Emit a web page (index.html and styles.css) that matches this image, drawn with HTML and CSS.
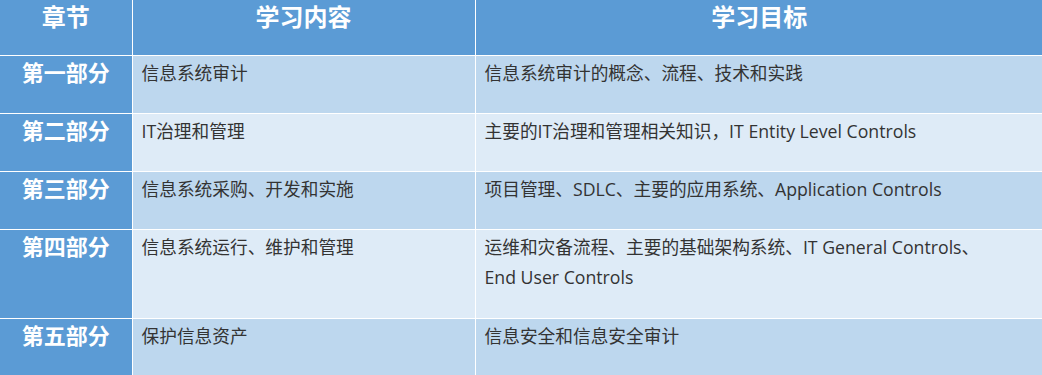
FILE: index.html
```html
<!DOCTYPE html>
<html lang="zh-CN">
<head>
<meta charset="utf-8">
<title>学习内容</title>
<link rel="stylesheet" href="styles.css">
</head>
<body>
<table class="plan">
  <colgroup>
    <col class="c1">
    <col class="c2">
    <col class="c3">
  </colgroup>
  <thead>
    <tr class="head">
      <th>章节</th>
      <th>学习内容</th>
      <th>学习目标</th>
    </tr>
  </thead>
  <tbody>
    <tr class="odd">
      <th>第一部分</th>
      <td>信息系统审计</td>
      <td>信息系统审计的概念、流程、技术和实践</td>
    </tr>
    <tr class="even">
      <th>第二部分</th>
      <td>IT治理和管理</td>
      <td>主要的IT治理和管理相关知识，IT Entity Level Controls</td>
    </tr>
    <tr class="odd">
      <th>第三部分</th>
      <td>信息系统采购、开发和实施</td>
      <td>项目管理、SDLC、主要的应用系统、Application Controls</td>
    </tr>
    <tr class="even tall">
      <th>第四部分</th>
      <td>信息系统运行、维护和管理</td>
      <td>运维和灾备流程、主要的基础架构系统、IT General Controls、<br>End User Controls</td>
    </tr>
    <tr class="odd">
      <th>第五部分</th>
      <td>保护信息资产</td>
      <td>信息安全和信息安全审计</td>
    </tr>
  </tbody>
</table>
</body>
</html>
```

FILE: styles.css
```css
html, body {
  margin: 0;
  padding: 0;
  background: #ffffff;
}

.plan {
  border-collapse: collapse;
  table-layout: fixed;
  width: 1043px;
  font-family: "Open Sans", "Noto Sans CJK SC", sans-serif;
}

.c1 { width: 132px; }
.c2 { width: 343px; }
.c3 { width: 568px; }

.plan th,
.plan td {
  border: 1px solid #ffffff;
  padding: 0;
  vertical-align: top;
  text-align: left;
}

.plan tr:first-child th { border-top: none; }
.plan th:first-child { border-left: none; }
.plan th:last-child,
.plan td:last-child { border-right: none; }

.head th {
  background: #5b9bd5;
  color: #ffffff;
  font-family: "Noto Sans CJK SC", sans-serif;
  font-weight: 700;
  font-size: 24px;
  line-height: 30px;
  padding-top: 1px;
  height: 54px;
  text-align: center;
}

.plan tbody th {
  background: #5b9bd5;
  color: #ffffff;
  font-family: "Noto Sans CJK SC", sans-serif;
  font-weight: 700;
  font-size: 22px;
  line-height: 30px;
  text-align: center;
  height: 57px;
}

.plan tbody td {
  color: #333333;
  font-size: 17.7px;
  line-height: 30px;
  padding: 2px 9px 0;
  height: 55px;
}

.tall th { height: 88px; }
.plan .tall td { height: 86px; }

.odd td { background: #bdd7ee; }
.even td { background: #deebf7; }
```
